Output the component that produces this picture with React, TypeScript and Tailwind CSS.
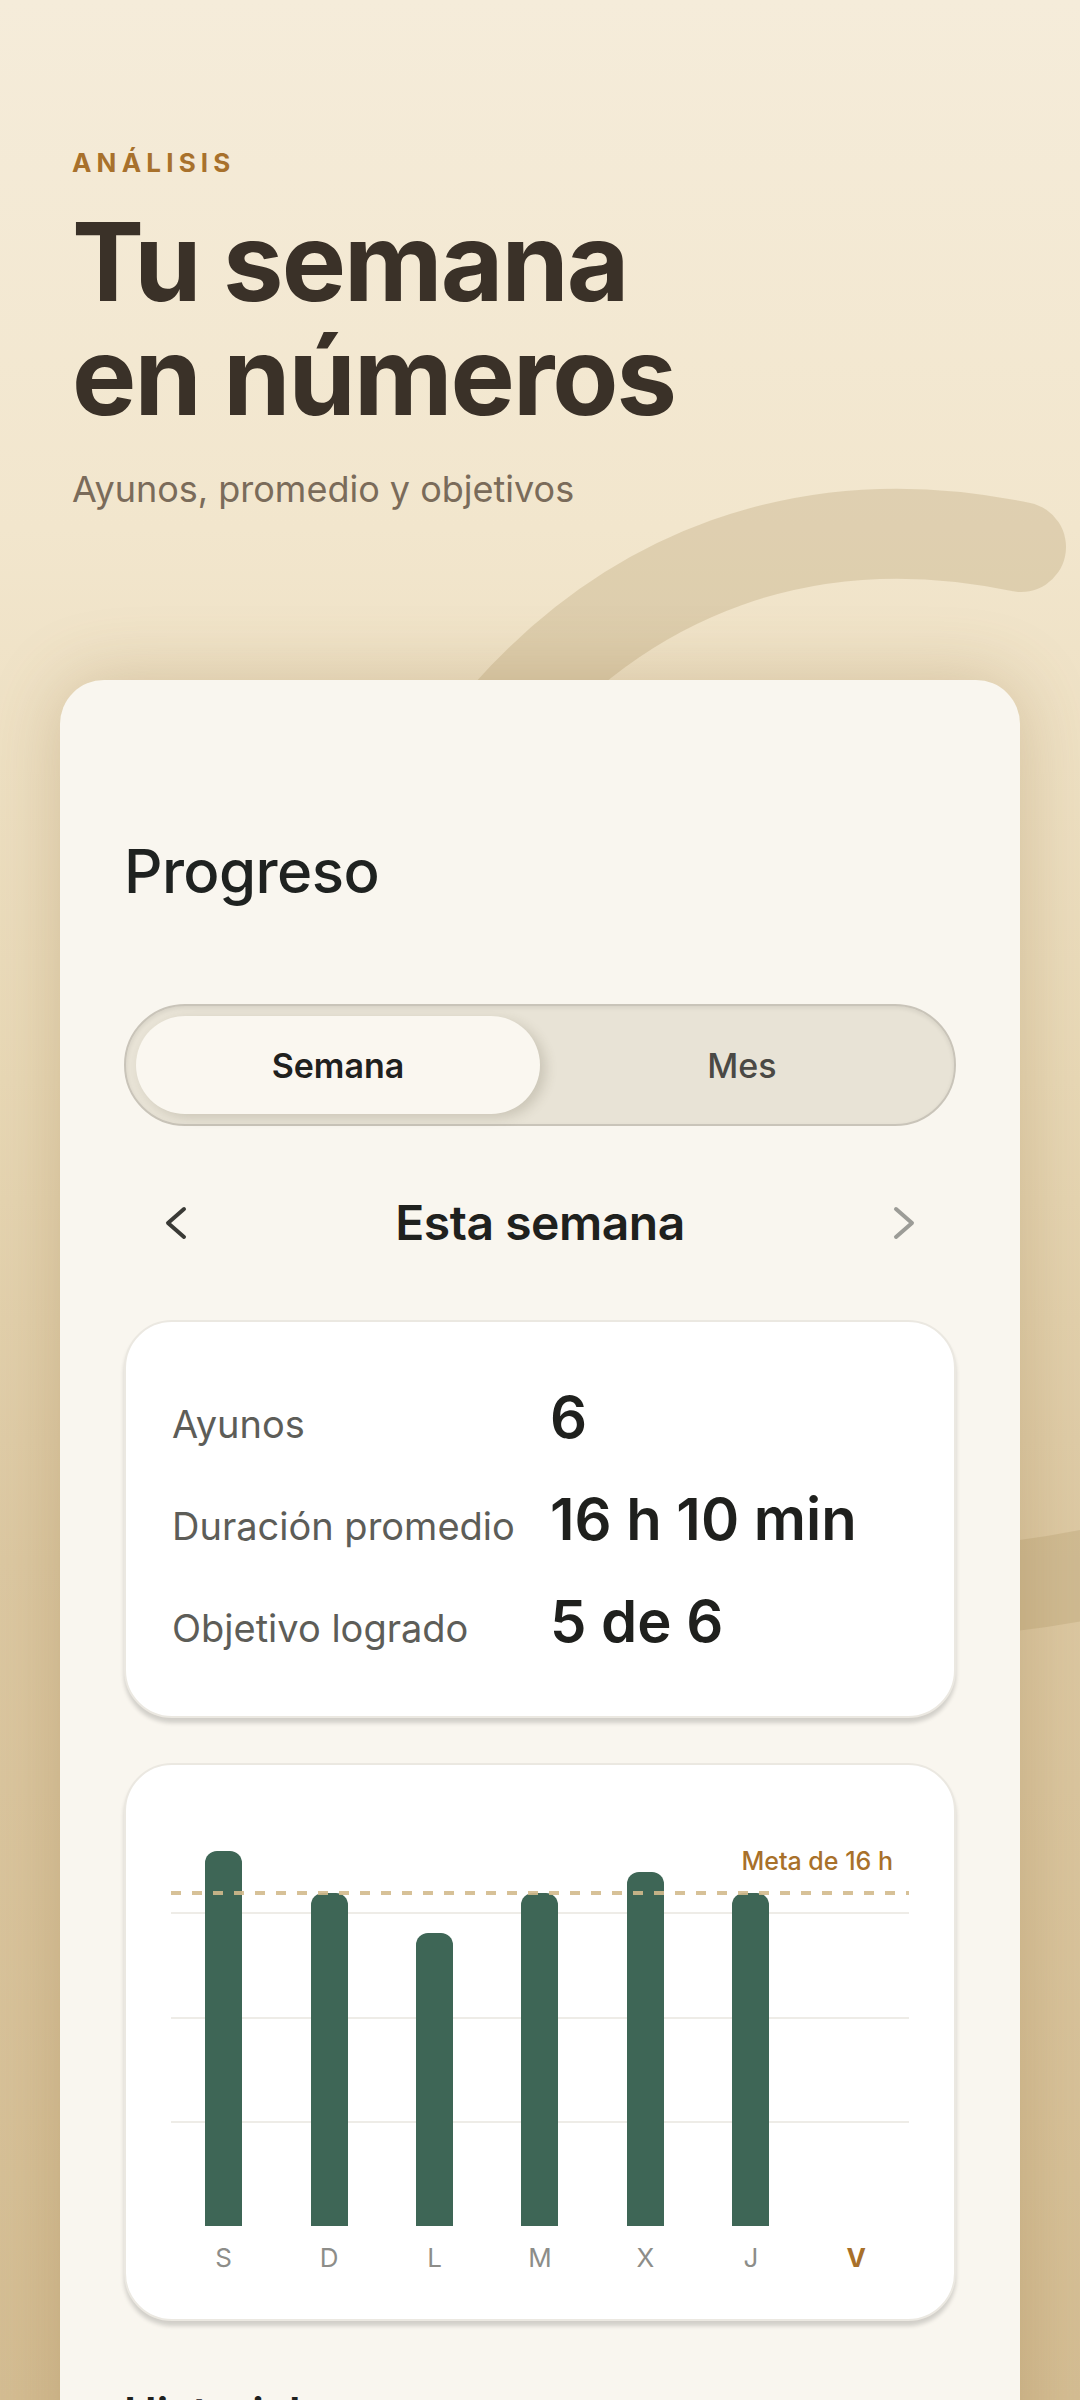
import React from 'react';

const STATS = [
  { label: 'Ayunos', value: '6' },
  { label: 'Duración promedio', value: '16 h 10 min' },
  { label: 'Objetivo logrado', value: '5 de 6' },
];

// altura de cada barra en px (null = sin datos todavía)
const DAYS: { day: string; h: number | null; today?: boolean }[] = [
  { day: 'S', h: 375 },
  { day: 'D', h: 333 },
  { day: 'L', h: 293 },
  { day: 'M', h: 333 },
  { day: 'X', h: 354 },
  { day: 'J', h: 333 },
  { day: 'V', h: null, today: true },
];

function Chevron({ dir, className }: { dir: 'left' | 'right'; className?: string }) {
  return (
    <svg width="24" height="34" viewBox="0 0 24 34" className={className} fill="none">
      <polyline
        points={dir === 'left' ? '20,3 4,17 20,31' : '4,3 20,17 4,31'}
        stroke="currentColor"
        strokeWidth="4"
        strokeLinecap="round"
        strokeLinejoin="round"
      />
    </svg>
  );
}

function StatsCard() {
  return (
    <div className="bg-white border-2 border-[#ebe8e1] rounded-[48px] shadow-[0_5px_4px_rgba(0,0,0,0.16)] pl-[46px] pr-6 py-[44px]">
      {STATS.map((s) => (
        <div key={s.label} className="grid grid-cols-[378px_1fr] items-baseline h-[102px] leading-[102px]">
          <span className="text-[38px] text-[#5d5d58]">{s.label}</span>
          <span className="text-[58px] font-semibold text-[#1f201d]">{s.value}</span>
        </div>
      ))}
    </div>
  );
}

function ChartCard() {
  return (
    <div className="bg-white border-2 border-[#ebe8e1] rounded-[48px] shadow-[0_5px_4px_rgba(0,0,0,0.16)] px-[45px] pt-[48px] pb-[45px]">
      <div className="relative h-[413px]">
        <span className="absolute right-[16px] top-[33px] text-[25px] leading-[30px] font-medium text-[#a8702a]">
          Meta de 16 h
        </span>
        <div className="absolute left-0 right-0 top-[99px] h-[2px] bg-[#eeece7]" />
        <div className="absolute left-0 right-0 top-[204px] h-[2px] bg-[#eeece7]" />
        <div className="absolute left-0 right-0 top-[308px] h-[2px] bg-[#eeece7]" />
        <div className="relative z-10 grid grid-cols-7 h-full items-end">
          {DAYS.map((d) => (
            <div key={d.day} className="flex justify-center">
              {d.h !== null && (
                <div className="w-[37px] rounded-t-[12px] bg-[#3e6656]" style={{ height: d.h }} />
              )}
            </div>
          ))}
        </div>
        <div className="absolute z-20 left-0 right-0 top-[78px] h-[4px] bg-[repeating-linear-gradient(90deg,#d2ba8c_0px,#d2ba8c_10px,transparent_10px,transparent_21px)] opacity-90" />
      </div>
      <div className="grid grid-cols-7 mt-[16px]">
        {DAYS.map((d) => (
          <span
            key={d.day}
            className={
              d.today
                ? 'text-center text-[26px] leading-[32px] font-bold text-[#a8702a]'
                : 'text-center text-[26px] leading-[32px] text-[#8d8d89]'
            }
          >
            {d.day}
          </span>
        ))}
      </div>
    </div>
  );
}

export default function App() {
  return (
    <div
      className="relative w-[1080px] h-[2400px] overflow-hidden bg-[linear-gradient(180deg,#f5ecda_0%,#f2e6cd_22%,#e8d8b6_45%,#dcc8a2_65%,#d4bd93_100%)]"
      style={{ fontFamily: 'Inter, "Noto Sans", sans-serif' }}
    >
      {/* arco decorativo detrás de la tarjeta */}
      <svg className="absolute inset-0 pointer-events-none" width="1080" height="2400" viewBox="0 0 1080 2400" fill="none">
        <path
          d="M1021 547 C 820 505, 620 560, 470 760 C 300 1000, 400 1800, 1220 1540"
          stroke="#b39a6c"
          strokeOpacity="0.3"
          strokeWidth="90"
          strokeLinecap="round"
        />
      </svg>

      <header className="relative pl-[72px] pt-[147px]">
        <p className="text-[26px] leading-[32px] font-bold tracking-[0.2em] text-[#a8712c]">ANÁLISIS</p>
        <h1 className="mt-[26px] text-[108px] leading-[114px] font-bold tracking-[-0.018em] text-[#3a3128]">
          Tu semana
          <br />
          en números
        </h1>
        <p className="mt-[34px] text-[36px] leading-[44px] text-[#7a6b5a]">Ayunos, promedio y objetivos</p>
      </header>

      <main className="relative z-10 mx-[60px] mt-[169px] bg-[#f9f6ef] rounded-t-[44px] shadow-[0_0_70px_rgba(140,105,50,0.28)] px-16 pt-[156px] pb-[200px]">
        <h2 className="text-[60px] leading-[70px] font-medium text-[#1f2220] tracking-[-0.01em]">Progreso</h2>

        <div className="mt-[98px] h-[122px] rounded-full border-2 border-[#c9c4b9] bg-[#e8e3d6] shadow-[inset_0_2px_4px_rgba(0,0,0,0.08)] p-[10px] flex">
          <button className="flex-1 rounded-full bg-[#faf7f0] shadow-[6px_4px_12px_rgba(80,70,50,0.18)] text-[34px] font-semibold text-[#1f211e]">
            Semana
          </button>
          <button className="flex-1 rounded-full text-[34px] font-medium text-[#4a4945]">Mes</button>
        </div>

        <div className="mt-[68px] h-[58px] flex items-center justify-between px-[40px]">
          <Chevron dir="left" className="text-[#3a3a36]" />
          <span className="text-[48px] font-semibold text-[#1f211e] tracking-[-0.01em]">Esta semana</span>
          <Chevron dir="right" className="text-[#9c9c97]" />
        </div>

        <div className="mt-[68px]">
          <StatsCard />
        </div>

        <div className="mt-[45px]">
          <ChartCard />
        </div>

        <h3 className="mt-[66px] text-[44px] leading-[53px] font-semibold text-[#1f211e]">Historial</h3>
      </main>
    </div>
  );
}
